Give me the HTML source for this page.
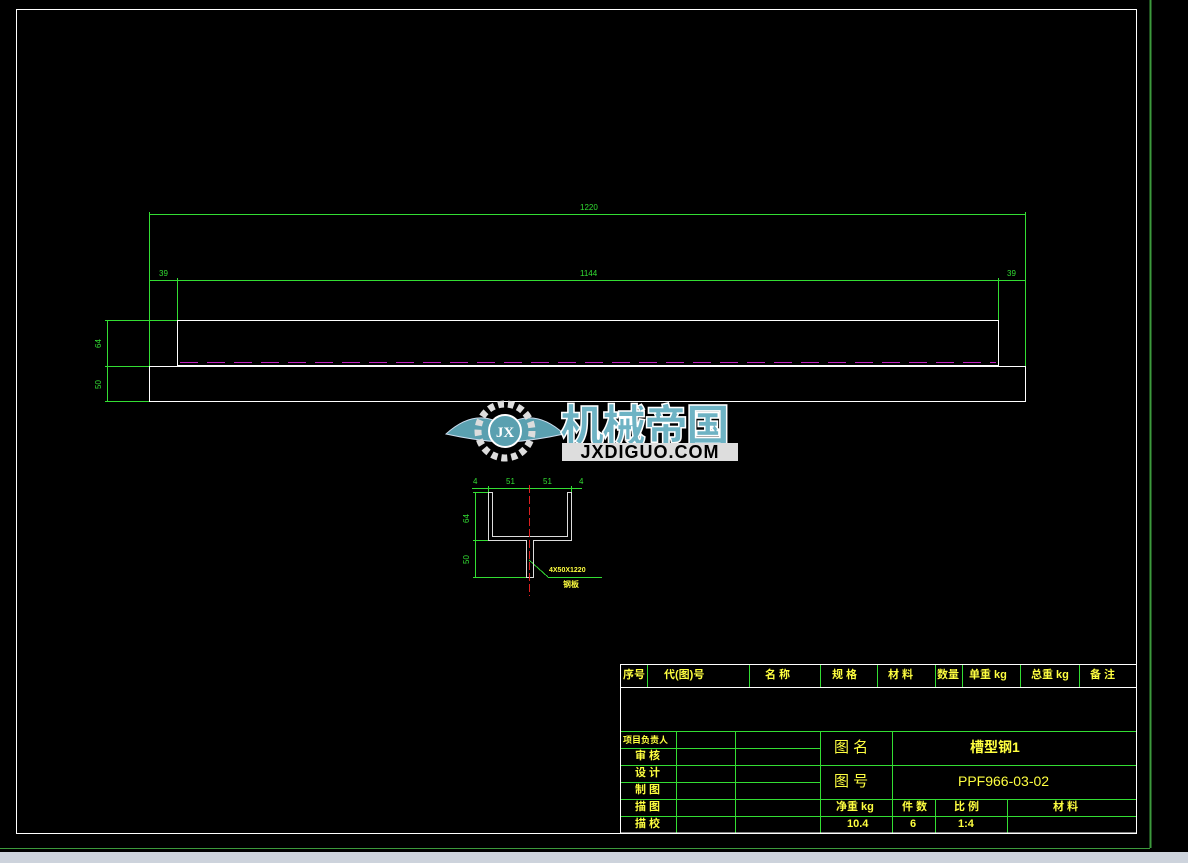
<!DOCTYPE html>
<html><head><meta charset="utf-8"><style>
body{margin:0;width:1188px;height:863px;background:#000;overflow:hidden;position:relative;font-family:"Liberation Sans","Noto Sans CJK SC",sans-serif}
.t{position:absolute;color:#ffff40;font-size:11px;font-weight:bold;white-space:nowrap;font-family:"Liberation Sans","Noto Sans CJK SC",sans-serif;line-height:13px}
</style></head><body>
<svg width="1188" height="863" style="position:absolute;left:0;top:0" shape-rendering="crispEdges">
<rect x="16.5" y="9.5" width="1120" height="824" fill="none" stroke="#fff" stroke-width="1"/>
<line x1="1150.5" y1="0" x2="1150.5" y2="848" stroke="#3c9a3c" stroke-width="2"/>
<line x1="0" y1="848.5" x2="1150" y2="848.5" stroke="#3c9a3c" stroke-width="1"/>
<rect x="0" y="852" width="1188" height="11" fill="#cdd3dc"/>
<g stroke="#33dd33" stroke-width="1" fill="none">
<line x1="149.5" y1="212" x2="149.5" y2="401"/><line x1="1025.5" y1="212" x2="1025.5" y2="401"/>
<line x1="149" y1="214.5" x2="1025" y2="214.5"/>
<line x1="149" y1="280.5" x2="1025" y2="280.5"/>
<line x1="177.5" y1="278" x2="177.5" y2="320"/><line x1="998.5" y1="278" x2="998.5" y2="320"/>
<line x1="107.5" y1="320" x2="107.5" y2="401"/>
<line x1="105" y1="320.5" x2="177" y2="320.5"/>
<line x1="105" y1="366.5" x2="177" y2="366.5"/>
<line x1="105" y1="401.5" x2="149" y2="401.5"/>
</g>
<g stroke="#fff" stroke-width="1" fill="none">
<rect x="177.5" y="320.5" width="821" height="45"/>
<rect x="149.5" y="366.5" width="876" height="35"/>
</g>
<line x1="180" y1="362.5" x2="996" y2="362.5" stroke="#c020c0" stroke-dasharray="18,9"/>
<g stroke="#33dd33" fill="none">
<line x1="472" y1="488.5" x2="582" y2="488.5"/>
<line x1="475.5" y1="492" x2="475.5" y2="577"/>
<line x1="473" y1="492.5" x2="488" y2="492.5"/>
<line x1="473" y1="540.5" x2="488" y2="540.5"/>
<line x1="473" y1="577.5" x2="526" y2="577.5"/>
<line x1="488.5" y1="486" x2="488.5" y2="492"/><line x1="571.5" y1="486" x2="571.5" y2="492"/>
<line x1="529" y1="560" x2="548" y2="577"/><line x1="548" y1="577.5" x2="602" y2="577.5"/>
</g>
<path d="M488.5 492.5V540.5H526.5V577.5H533.5V540.5H571.5V492.5H567.5V536.5H492.5V492.5Z" fill="none" stroke="#ddd"/>
<line x1="529.5" y1="485" x2="529.5" y2="596" stroke="#dd2020" stroke-dasharray="8,3"/>
<g stroke="#33dd33" fill="none">
<line x1="620" y1="664.5" x2="1136" y2="664.5"/>
<line x1="620" y1="731.5" x2="1136" y2="731.5"/>
<line x1="620" y1="748.5" x2="820" y2="748.5"/>
<line x1="620" y1="765.5" x2="1136" y2="765.5"/>
<line x1="620" y1="782.5" x2="820" y2="782.5"/>
<line x1="620" y1="799.5" x2="1136" y2="799.5"/>
<line x1="620" y1="816.5" x2="1136" y2="816.5"/>
<line x1="647.5" y1="664" x2="647.5" y2="687"/><line x1="749.5" y1="664" x2="749.5" y2="687"/><line x1="820.5" y1="664" x2="820.5" y2="687"/><line x1="877.5" y1="664" x2="877.5" y2="687"/><line x1="935.5" y1="664" x2="935.5" y2="687"/><line x1="962.5" y1="664" x2="962.5" y2="687"/><line x1="1020.5" y1="664" x2="1020.5" y2="687"/><line x1="1079.5" y1="664" x2="1079.5" y2="687"/>
<line x1="676.5" y1="731" x2="676.5" y2="833"/><line x1="735.5" y1="731" x2="735.5" y2="833"/><line x1="820.5" y1="731" x2="820.5" y2="833"/><line x1="892.5" y1="731" x2="892.5" y2="833"/>
<line x1="935.5" y1="799" x2="935.5" y2="833"/><line x1="1007.5" y1="799" x2="1007.5" y2="833"/>
</g>
<g stroke="#fff" fill="none"><rect x="620.5" y="664.5" width="516" height="168.5"/><line x1="620" y1="687.5" x2="1136" y2="687.5"/></g>
</svg>
<div style="position:absolute;left:445px;top:398px;width:120px;height:66px">
<svg width="120" height="66"><path d="M1 36 Q25 14 48 22 L54 44 Q28 42 1 36Z M119 36 Q95 14 72 22 L66 44 Q92 42 119 36Z" fill="#5aa0b0" stroke="#cde" stroke-width="1"/><circle cx="60" cy="33" r="27" fill="none" stroke="#ddd" stroke-width="7" stroke-dasharray="6,4"/><circle cx="60" cy="33" r="16" fill="#5aa0b0" stroke="#fff" stroke-width="2"/><text x="60" y="39" font-size="15" fill="#fff" text-anchor="middle" font-family="Liberation Serif" font-weight="bold">JX</text></svg></div>
<div style="position:absolute;left:560px;top:398px;color:#6eb3c4;font-size:44px;font-weight:900;font-family:'Noto Sans CJK SC',sans-serif;line-height:48px;letter-spacing:-2px;-webkit-text-stroke:1.5px #fff">机械帝国</div>
<div style="position:absolute;left:562px;top:443px;width:176px;height:18px;background:#ddd"></div>
<div style="position:absolute;left:562px;top:442px;width:176px;text-align:center;color:#000;font-size:18px;font-weight:bold;line-height:20px;letter-spacing:1px;font-family:'Liberation Sans',sans-serif">JXDIGUO.COM</div>
<div class="t" style="left:580px;top:201px;color:#33dd33;font-size:8px;font-weight:normal">1220</div>
<div class="t" style="left:580px;top:267px;color:#33dd33;font-size:8px;font-weight:normal">1144</div>
<div class="t" style="left:159px;top:267px;color:#33dd33;font-size:8px;font-weight:normal">39</div>
<div class="t" style="left:1007px;top:267px;color:#33dd33;font-size:8px;font-weight:normal">39</div>
<div class="t" style="left:94px;top:337px;color:#33dd33;font-size:8px;font-weight:normal;transform:rotate(-90deg)">64</div>
<div class="t" style="left:94px;top:378px;color:#33dd33;font-size:8px;font-weight:normal;transform:rotate(-90deg)">50</div>
<div class="t" style="left:473px;top:475px;color:#33dd33;font-size:8px;font-weight:normal">4</div>
<div class="t" style="left:506px;top:475px;color:#33dd33;font-size:8px;font-weight:normal">51</div>
<div class="t" style="left:543px;top:475px;color:#33dd33;font-size:8px;font-weight:normal">51</div>
<div class="t" style="left:579px;top:475px;color:#33dd33;font-size:8px;font-weight:normal">4</div>
<div class="t" style="left:462px;top:512px;color:#33dd33;font-size:8px;font-weight:normal;transform:rotate(-90deg)">64</div>
<div class="t" style="left:462px;top:553px;color:#33dd33;font-size:8px;font-weight:normal;transform:rotate(-90deg)">50</div>
<div class="t" style="left:549px;top:564px;font-size:7px">4X50X1220</div>
<div class="t" style="left:563px;top:578px;font-size:8px">钢板</div>
<div class="t" style="left:623px;top:669px">序号</div>
<div class="t" style="left:664px;top:669px">代(图)号</div>
<div class="t" style="left:765px;top:669px">名 称</div>
<div class="t" style="left:832px;top:669px">规 格</div>
<div class="t" style="left:888px;top:669px">材 料</div>
<div class="t" style="left:937px;top:669px">数量</div>
<div class="t" style="left:969px;top:669px">单重 kg</div>
<div class="t" style="left:1031px;top:669px">总重 kg</div>
<div class="t" style="left:1090px;top:669px">备 注</div>
<div class="t" style="left:623px;top:734px;font-size:9px">项目负责人</div>
<div class="t" style="left:635px;top:750px">审 核</div>
<div class="t" style="left:635px;top:767px">设 计</div>
<div class="t" style="left:635px;top:784px">制 图</div>
<div class="t" style="left:635px;top:801px">描 图</div>
<div class="t" style="left:635px;top:818px">描 校</div>
<div class="t" style="left:834px;top:739px;font-size:15px;font-weight:normal;line-height:17px">图 名</div>
<div class="t" style="left:834px;top:773px;font-size:15px;font-weight:normal;line-height:17px">图 号</div>
<div class="t" style="left:970px;top:739px;font-size:14px;line-height:17px">槽型钢1</div>
<div class="t" style="left:958px;top:773px;font-size:14px;font-weight:normal;line-height:17px">PPF966-03-02</div>
<div class="t" style="left:836px;top:801px">净重 kg</div>
<div class="t" style="left:902px;top:801px">件 数</div>
<div class="t" style="left:954px;top:801px">比 例</div>
<div class="t" style="left:1053px;top:801px">材 料</div>
<div class="t" style="left:847px;top:818px">10.4</div>
<div class="t" style="left:910px;top:818px">6</div>
<div class="t" style="left:958px;top:818px">1:4</div>
</body></html>
